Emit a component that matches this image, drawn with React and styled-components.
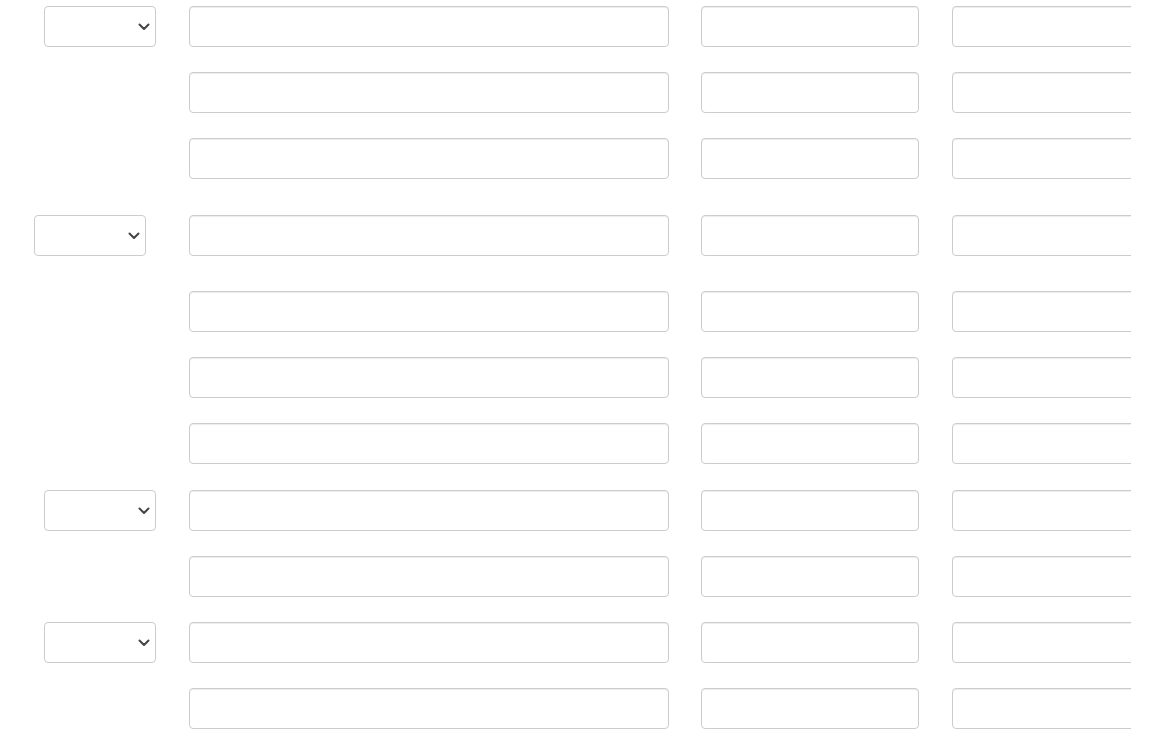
import React from "react";
import styled, { createGlobalStyle } from "styled-components";

const Global = createGlobalStyle`
  html, body { margin: 0; padding: 0; background: #fff; }
  body { font-family: "Liberation Sans", Arial, sans-serif; font-size: 14px; color: #333; }
  * { box-sizing: border-box; }
`;

const Frame = styled.div`
  width: 1131px;
  overflow: hidden;
  padding-bottom: 7px;
`;

const Row = styled.div`
  display: flex;
  align-items: flex-start;
  margin-top: ${(p) => p.$top}px;
  height: 41px;
`;

const SelectCell = styled.div`
  width: 189px;
  flex: none;
  padding-left: ${(p) => p.$indent}px;
`;

const SelectWrap = styled.div`
  position: relative;
  width: 112px;
  height: 41px;
`;

const Select = styled.select`
  appearance: none;
  -webkit-appearance: none;
  width: 100%;
  height: 100%;
  border: 1px solid #ccc;
  border-radius: 4px;
  background: #fff;
  padding: 6px 12px;
  font: inherit;
  color: #555;
  outline: none;
`;

const Chevron = styled.svg`
  position: absolute;
  right: 6px;
  top: 17px;
  width: 12px;
  height: 8px;
  pointer-events: none;
`;

const Input = styled.input`
  flex: none;
  width: ${(p) => p.$w}px;
  height: 41px;
  margin-left: ${(p) => p.$ml}px;
  border: 1px solid #ccc;
  border-radius: 4px;
  background: #fff;
  box-shadow: inset 0 1px 1px rgba(0, 0, 0, 0.075);
  padding: 6px 12px;
  font: inherit;
  color: #555;
  outline: none;
`;

const rows = [
  { top: 6, sel: 44 },
  { top: 25 },
  { top: 25 },
  { top: 36, sel: 34 },
  { top: 35 },
  { top: 25 },
  { top: 25 },
  { top: 26, sel: 44 },
  { top: 25 },
  { top: 25, sel: 44 },
  { top: 25 },
];

function Dropdown() {
  return (
    <SelectWrap>
      <Select defaultValue="">
        <option value=""></option>
      </Select>
      <Chevron viewBox="0 0 12 8">
        <path d="M1.5 1.5 L6 6 L10.5 1.5" fill="none" stroke="#444" strokeWidth="2" strokeLinecap="round" strokeLinejoin="round" />
      </Chevron>
    </SelectWrap>
  );
}

export default function App() {
  return (
    <>
      <Global />
      <Frame>
        {rows.map((r, i) => (
          <Row key={i} $top={r.top}>
            <SelectCell $indent={r.sel || 0}>{r.sel ? <Dropdown /> : null}</SelectCell>
            <Input $w={480} $ml={0} />
            <Input $w={218} $ml={32} />
            <Input $w={218} $ml={33} />
          </Row>
        ))}
      </Frame>
    </>
  );
}
